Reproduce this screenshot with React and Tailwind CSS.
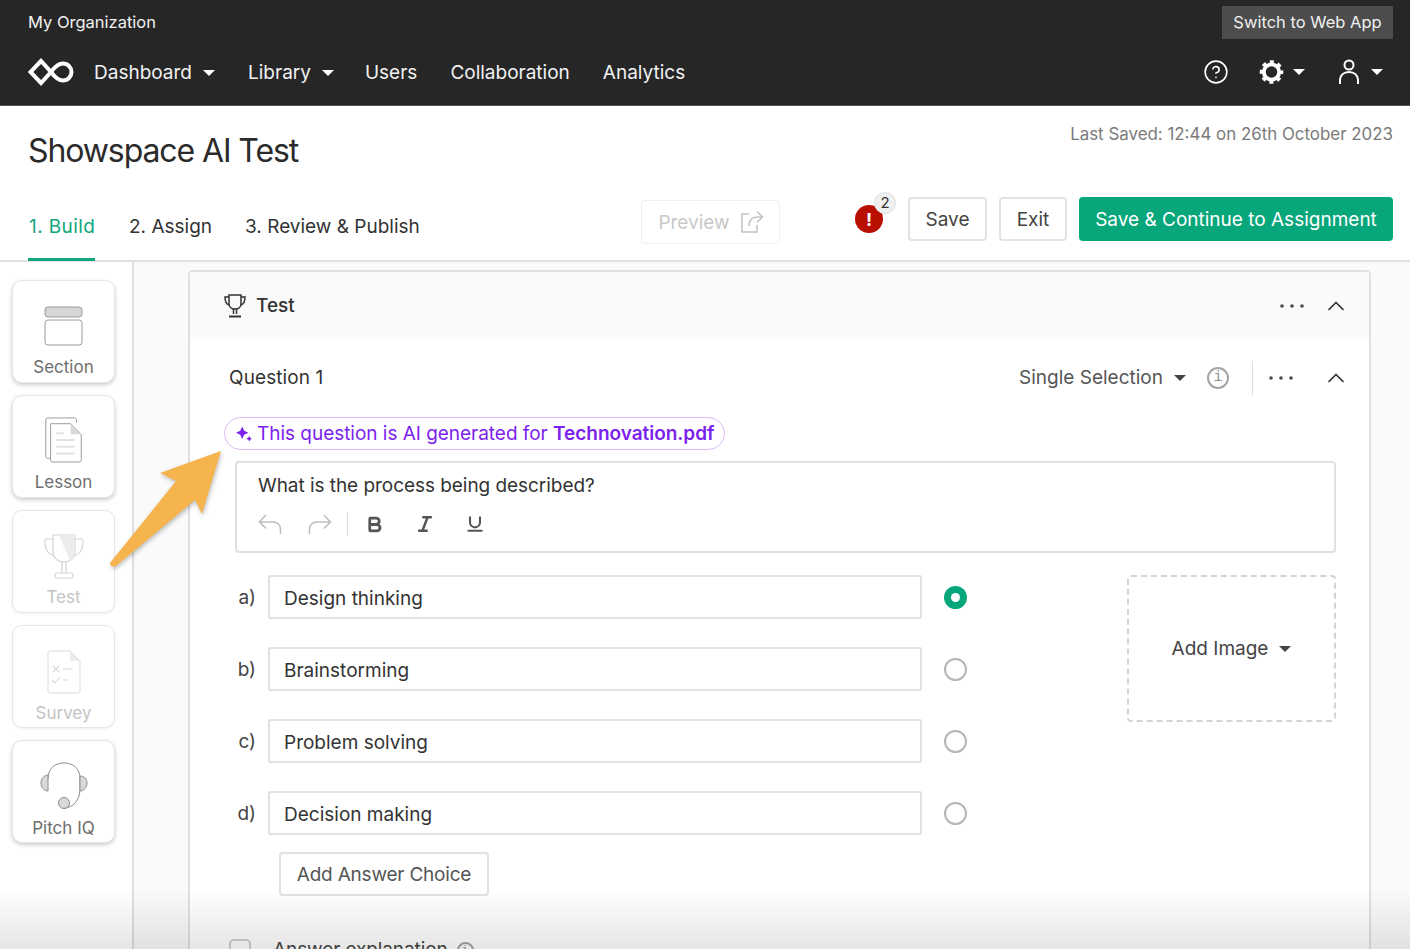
import { Bold, ChevronUp, CircleHelp, Italic, Underline } from "lucide-react";

function Caret({ className = "border-t-white" }) {
  return <span className={`inline-block w-0 h-0 border-x-[6px] border-x-transparent border-t-[6px] ${className}`} />;
}

function Dots() {
  return (
    <svg width="26" height="6" viewBox="0 0 26 6" className="fill-[#4a4a4a]">
      <circle cx="3" cy="3" r="1.8" />
      <circle cx="13" cy="3" r="1.8" />
      <circle cx="23" cy="3" r="1.8" />
    </svg>
  );
}

function Logo() {
  return (
    <svg width="46" height="28" viewBox="0 0 46 28" fill="none" className="stroke-white" strokeWidth="4">
      <path d="M13 3 L2.500 14 L13 25 L23 14 C27 8.500 31 5.500 35 5.500 C40 5.500 43.500 9.500 43.500 14 C43.500 18.500 40 22.500 35 22.500 C31 22.500 27 19.500 23 14 L13 3 Z" />
    </svg>
  );
}

function Gear() {
  return (
    <svg width="25" height="26" viewBox="0 0 26 26" fill="none" className="stroke-white">
      <circle cx="13" cy="13" r="8" strokeWidth="4" />
      <circle cx="13" cy="13" r="10.500" strokeWidth="3.500" strokeDasharray="4.200 4.050" strokeDashoffset="2.100" />
    </svg>
  );
}

function Person() {
  return (
    <svg width="22" height="26" viewBox="0 0 22 26" fill="none" className="stroke-white" strokeWidth="2">
      <circle cx="11" cy="6" r="4.500" />
      <path d="M2 25v-3c0-6 4-9 9-9s9 3 9 9v3" />
    </svg>
  );
}

function ShareIcon() {
  return (
    <svg width="24" height="24" viewBox="0 0 24 24" fill="none" className="stroke-[#c4c4c4]" strokeWidth="1.600">
      <path d="M9 4H2v18h15v-7" />
      <path d="M9 16c0-6 3-9 9-9h4M17 1.500 22.500 7 17 12.500" />
    </svg>
  );
}

function UndoIcon({ flip }) {
  return (
    <svg width="24" height="24" viewBox="0 0 24 24" fill="none" stroke="#bdbdbd" strokeWidth="1.500" className={flip ? "-scale-x-100" : ""}>
      <path d="M8 3 1.500 10 8 16.500M1.500 10H15c4.500 0 7.500 3 7.500 7v5" />
    </svg>
  );
}

function SectionIcon() {
  return (
    <svg width="40" height="40" viewBox="0 0 40 40">
      <rect x="1" y="1" width="37" height="10" rx="3" fill="#d6d6d6" stroke="#9a9a9a" />
      <rect x="1" y="14" width="37" height="25" rx="3" fill="#fff" stroke="#9a9a9a" />
    </svg>
  );
}

function LessonIcon() {
  return (
    <svg width="40" height="46" viewBox="0 0 40 48" fill="none" stroke="#9a9a9a">
      <path d="M6 43H3a2 2 0 0 1-2-2V3a2 2 0 0 1 2-2h28a2 2 0 0 1 2 2v3" />
      <path d="M6 7h21l11 11v27a2 2 0 0 1-2 2H8a2 2 0 0 1-2-2V7z" fill="#fff" />
      <path d="M27 7v11h11z" fill="#d9d9d9" stroke="none" />
      <path d="M12 17h8M12 24h19M12 31h19M12 38h19" stroke="#e2e2e2" strokeWidth="2" />
    </svg>
  );
}

function TrophyIcon() {
  return (
    <svg width="40" height="46" viewBox="0 0 40 46" fill="none" stroke="#d4d4d4" strokeWidth="1.200">
      <path d="M9 1h22v17c0 6-5 10-11 10S9 24 9 18V1z" fill="#fff" />
      <path d="M15 1h16v17c0 4-2 7-5 9z" fill="#ececec" stroke="none" />
      <path d="M9 5H3c-2 0-2 1-2 3 0 7 3 12 9 14M31 5h6c2 0 2 1 2 3 0 7-3 12-9 14" />
      <path d="M18 28v11M22 28v11" />
      <rect x="11" y="39" width="18" height="5" rx="1.500" />
    </svg>
  );
}

function SurveyIcon() {
  return (
    <svg width="34" height="44" viewBox="0 0 34 44" fill="none" stroke="#d9d9d9">
      <path d="M3 1h20l10 10v30a2 2 0 0 1-2 2H3a2 2 0 0 1-2-2V3a2 2 0 0 1 2-2z" fill="#fff" />
      <path d="M23 1v10h10z" fill="#ececec" stroke="none" />
      <path d="M6 16l6 6M12 16l-6 6M5 30l3 3 5-6" strokeWidth="1.100" />
      <path d="M16 19h10M16 30h6" stroke="#ececec" strokeWidth="2" />
    </svg>
  );
}

function HeadsetIcon() {
  return (
    <svg width="48" height="48" viewBox="0 0 48 48" fill="none" stroke="#8c8c8c">
      <path d="M8 17C8 7 14 1 24 1s16 6 16 16v10c0 11-7 19-16 19" />
      <path d="M8 13v16c-4 0-7-4-7-8s3-8 7-8z" fill="#d9d9d9" />
      <path d="M40 14c4 0 7 3 7 7s-3 8-7 8z" fill="#d9d9d9" />
      <circle cx="24" cy="41" r="5.500" fill="#d9d9d9" />
    </svg>
  );
}

function Sparkle() {
  return (
    <svg width="16" height="16" viewBox="0 0 15.500 15.500" className="fill-[#7c22ee]">
      <path d="M6 .500 7.900 4.600 12 6.500 7.900 8.400 6 12.500 4.100 8.400 0 6.500 4.100 4.600z" />
      <path d="M12.800 9.500l.9 1.900 1.900.9-1.900.9-.9 1.900-.9-1.900-1.900-.9 1.900-.9z" />
    </svg>
  );
}

function TrophyOutline() {
  return (
    <svg width="22" height="24" viewBox="0 0 22 24" fill="none" stroke="#333" strokeWidth="1.500">
      <path d="M5 1h12v9c0 3-2.500 5-6 5s-6-2-6-5V1z" />
      <path d="M5 3H1c0 4 1 7 4 8M17 3h4c0 4-1 7-4 8" />
      <path d="M9.500 15v5M12.500 15v5" />
      <path d="M5 22.500h12" strokeWidth="2" />
    </svg>
  );
}

function InfoCircle({ size = 22, text = "text-[15px]" }) {
  return (
    <span
      style={{ width: size, height: size }}
      className={`inline-flex items-center justify-center rounded-full border-2 border-[#a3a3a3] text-[#8f8f8f] font-['Liberation_Mono',monospace] ${text}`}
    >
      i
    </span>
  );
}

const tools = [
  { label: "Section", icon: <SectionIcon />, pt: "pt-[25px]", gap: "mt-[10px]", color: "text-[#6e6e6e]", shadow: true },
  { label: "Lesson", icon: <LessonIcon />, pt: "pt-[21px]", gap: "mt-[8px]", color: "text-[#6e6e6e]", shadow: true },
  { label: "Test", icon: <TrophyIcon />, pt: "pt-[23px]", gap: "mt-[6px]", color: "text-[#c4c4c4]" },
  { label: "Survey", icon: <SurveyIcon />, pt: "pt-[24px]", gap: "mt-[8px]", color: "text-[#c4c4c4]" },
  { label: "Pitch IQ", icon: <HeadsetIcon />, pt: "pt-[21px]", gap: "mt-[7px]", color: "text-[#6e6e6e]", shadow: true },
];

const answers = [
  { key: "a)", text: "Design thinking", selected: true },
  { key: "b)", text: "Brainstorming" },
  { key: "c)", text: "Problem solving" },
  { key: "d)", text: "Decision making" },
];

export default function App() {
  return (
    <div className="relative h-[949px] w-[1410px] overflow-hidden bg-white font-['Inter',sans-serif] text-[#333]">
      {/* top nav */}
      <header className="h-[106px] bg-[#262626] border-b border-[#555] text-[#f2f2f2] px-[17px]">
        <div className="flex items-start justify-between pt-[6px] pl-[11px]">
          <span className="text-[16.500px] leading-[33px]">My Organization</span>
          <button className="h-[33px] w-[171px] bg-[#4d4d4d] text-[16.500px] text-[#f0f0f0]">Switch to Web App</button>
        </div>
        <div className="flex items-center justify-between mt-[11px] pl-[11px] h-[44px]">
          <nav className="flex items-center text-[19px] pt-[2px]">
            <span className="-mt-[2px]"><Logo /></span>
            <span className="ml-[20px]">Dashboard</span>
            <span className="ml-[11px] flex"><Caret /></span>
            <span className="ml-[33px]">Library</span>
            <span className="ml-[11px] flex"><Caret /></span>
            <span className="ml-[31px]">Users</span>
            <span className="ml-[33px]">Collaboration</span>
            <span className="ml-[33px]">Analytics</span>
          </nav>
          <div className="flex items-center pr-[10px]">
            <CircleHelp size={26} strokeWidth={1.500} className="text-white" />
            <span className="ml-[30px]"><Gear /></span>
            <span className="ml-[9px] flex"><Caret /></span>
            <span className="ml-[33px]"><Person /></span>
            <span className="ml-[11px] flex"><Caret /></span>
          </div>
        </div>
      </header>

      {/* title and steps */}
      <section className="h-[156px] border-b-2 border-[#e0e0e0] px-[17px] flex flex-col">
        <div className="flex items-start justify-between pl-[11px]">
          <h1 className="text-[32px] tracking-[-1.100px] leading-[40px] mt-[25px] text-[#2b2b2b]">Showspace AI Test</h1>
          <span className="text-[16.900px] text-[#7a7a7a] mt-[18px] leading-[20px]">Last Saved: 12:44 on 26th October 2023</span>
        </div>
        <div className="flex items-start justify-between pl-[11px] mt-[26px]">
          <div className="flex text-[19px] gap-[33px]">
            <span className="h-[64px] pt-[14px] w-[67px] mr-px border-b-[3px] border-[#10a77c] text-[#10a77c] whitespace-nowrap leading-[32px] tracking-[0.4px] pl-px">1. Build</span>
            <span className="pt-[14px] leading-[32px]">2. Assign</span>
            <span className="pt-[14px] leading-[32px]">3. Review &amp; Publish</span>
          </div>
          <div className="flex items-start">
            <button className="mt-[3px] flex items-center justify-center gap-[10px] pl-px h-[44px] w-[139px] rounded-[4px] border border-[#efefef] text-[19px] text-[#c9c9c9]">
              <span className="pt-[2px]">Preview</span> <ShareIcon />
            </button>
            <div className="relative ml-[75px] mt-[8px] w-[28px] h-[28px] rounded-full bg-[#b80f00] flex items-center justify-center text-white font-bold text-[18px]">
              !
              <span className="absolute -top-[13px] left-[19px] w-[22px] h-[22px] rounded-full bg-[#f0f0f0] border border-[#e0e0e0] text-[#333] font-normal text-[15px] flex items-center justify-center">2</span>
            </div>
            <button className="ml-[25px] h-[44px] w-[79px] pt-[2px] rounded-[4px] border-2 border-[#e2e2e2] text-[19px] text-[#444]">Save</button>
            <button className="ml-[12px] h-[44px] w-[68px] pt-[2px] rounded-[4px] border-2 border-[#e2e2e2] text-[19px] text-[#444]">Exit</button>
            <button className="ml-[12px] h-[44px] w-[314px] pt-[2px] rounded-[4px] bg-[#07a67b] text-[19px] text-white">Save &amp; Continue to Assignment</button>
          </div>
        </div>
      </section>

      <div className="flex h-[687px]">
        {/* tools rail */}
        <aside className="w-[134px] shrink-0 border-r-2 border-[#dedede] pl-[12px] pt-[18px] flex flex-col gap-[12px] bg-white">
          {tools.map((t) => (
            <div
              key={t.label}
              className={`w-[103px] h-[103px] rounded-[10px] border border-[#e6e6e6] bg-white flex flex-col items-center ${t.pt} ${t.shadow ? "shadow-[0_2px_4px_rgba(0,0,0,0.2)]" : "shadow-[0_1px_3px_rgba(0,0,0,0.07)]"}`}
            >
              {t.icon}
              <span className={`text-[17px] leading-[22px] ${t.gap} ${t.color}`}>{t.label}</span>
            </div>
          ))}
        </aside>

        {/* builder */}
        <main className="flex-1 bg-[#fafafa] pl-[54px] pr-[39px] pt-[8px]">
          <div className="h-[700px] rounded-t-[5px] border-2 border-b-0 border-[#e0e0e0] bg-white">
            <div className="h-[67px] bg-[#fafafa] flex items-center justify-between pl-[34px] pr-[19px]">
              <div className="flex items-center gap-[10px] text-[19px] font-medium text-[#333]">
                <TrophyOutline /> <span className="pt-[2px]">Test</span>
              </div>
              <div className="flex items-center gap-[17px]">
                <Dots />
                <ChevronUp size={28} strokeWidth={1.500} className="text-[#333]" />
              </div>
            </div>

            <div className="pl-[34px] pr-[33px]">
              <div className="flex items-center justify-between h-[78px] pl-[5px]">
                <span className="text-[19px] tracking-[0.1px] pt-px text-[#333]">Question 1</span>
                <div className="flex items-center text-[19px] text-[#555] -mr-[14px]">
                  <span className="pt-px">Single Selection</span>
                  <span className="ml-[11px] flex"><Caret className="border-t-[#444]" /></span>
                  <span className="ml-[21px] flex"><InfoCircle /></span>
                  <span className="ml-[23px] w-px h-[34px] bg-[#ddd]" />
                  <span className="ml-[15px] flex"><Dots /></span>
                  <ChevronUp size={28} strokeWidth={1.500} className="ml-[28px] text-[#333]" />
                </div>
              </div>

              <div className="inline-flex items-center gap-[5px] h-[33px] pl-[11px] pr-[10px] rounded-full border border-[#dcbcfb] text-[19px] tracking-[-0.03px] text-[#7c22ee] whitespace-nowrap">
                <Sparkle />
                <span className="pt-px">This question is AI generated for <b className="font-semibold">Technovation.pdf</b></span>
              </div>

              <div className="ml-[11px] mt-[11px] h-[92px] rounded-[4px] border-2 border-[#e0e0e0] pl-[21px] pt-[10px]">
                <p className="text-[19px] tracking-[-0.05px] leading-[26px] text-[#333]">What is the process being described?</p>
                <div className="flex items-center mt-[12px] h-[26px]">
                  <UndoIcon />
                  <span className="ml-[26px]"><UndoIcon flip /></span>
                  <span className="ml-[15px] w-px h-[24px] bg-[#ddd]" />
                  <Bold size={19} strokeWidth={3.500} className="ml-[17px] text-[#555]" />
                  <Italic size={20} strokeWidth={3} className="ml-[31px] text-[#555]" />
                  <Underline size={20} strokeWidth={2.500} className="ml-[30px] text-[#555]" />
                </div>
              </div>

              <div className="flex justify-between mt-[22px]">
                <div className="flex flex-col gap-[28px]">
                  {answers.map((a) => (
                    <div key={a.key} className="flex items-center">
                      <span className="w-[44px] text-right pr-[12px] pt-[2px] text-[19px] text-[#444]">{a.key}</span>
                      <div className="w-[654px] h-[44px] pt-[4px] rounded-[2px] border-2 border-[#e2e2e2] flex items-center pl-[14px] text-[19px] text-[#333]">{a.text}</div>
                      <span className={`ml-[22px] w-[23px] h-[23px] rounded-full flex items-center justify-center ${a.selected ? "bg-[#07a67b]" : "border-2 border-[#b5b5b5]"}`}>
                        {a.selected && <span className="w-[9px] h-[9px] rounded-full bg-white" />}
                      </span>
                    </div>
                  ))}
                </div>
                <div className="w-[209px] h-[147px] pt-px rounded-[4px] border-2 border-dashed border-[#d4d4d4] flex items-center justify-center gap-[11px] text-[19px] text-[#444]">
                  Add Image <Caret className="border-t-[#444]" />
                </div>
              </div>

              <button className="mt-[17px] ml-[55px] w-[210px] h-[44px] pt-[3px] rounded-[4px] border-2 border-[#e2e2e2] text-[19px] tracking-[-0.2px] text-[#555]">Add Answer Choice</button>

              <div className="flex items-center mt-[40px] pl-[5px] text-[19px] tracking-[-0.1px] text-[#444]">
                <span className="w-[22px] h-[22px] rounded-[5px] border-2 border-[#cfcfcf]" />
                <span className="ml-[22px]">Answer explanation</span>
                <span className="ml-[9px] flex"><InfoCircle size={17} text="text-[11px]" /></span>
              </div>
            </div>
          </div>
        </main>
      </div>

      {/* annotation arrow */}
      <svg className="absolute left-[105px] top-[445px] drop-shadow-[1px_2px_2px_rgba(0,0,0,0.25)]" width="125" height="130" viewBox="105 445 125 130">
        <path d="M221 451 L160 473 L176 481 L110 563 Q111 568 116 566 L195 500 L202 514 Z" fill="#f5b44e" />
      </svg>

      {/* fade at the bottom */}
      <div className="absolute inset-x-0 bottom-0 h-[60px] bg-gradient-to-b from-transparent to-black/10 pointer-events-none" />
    </div>
  );
}
